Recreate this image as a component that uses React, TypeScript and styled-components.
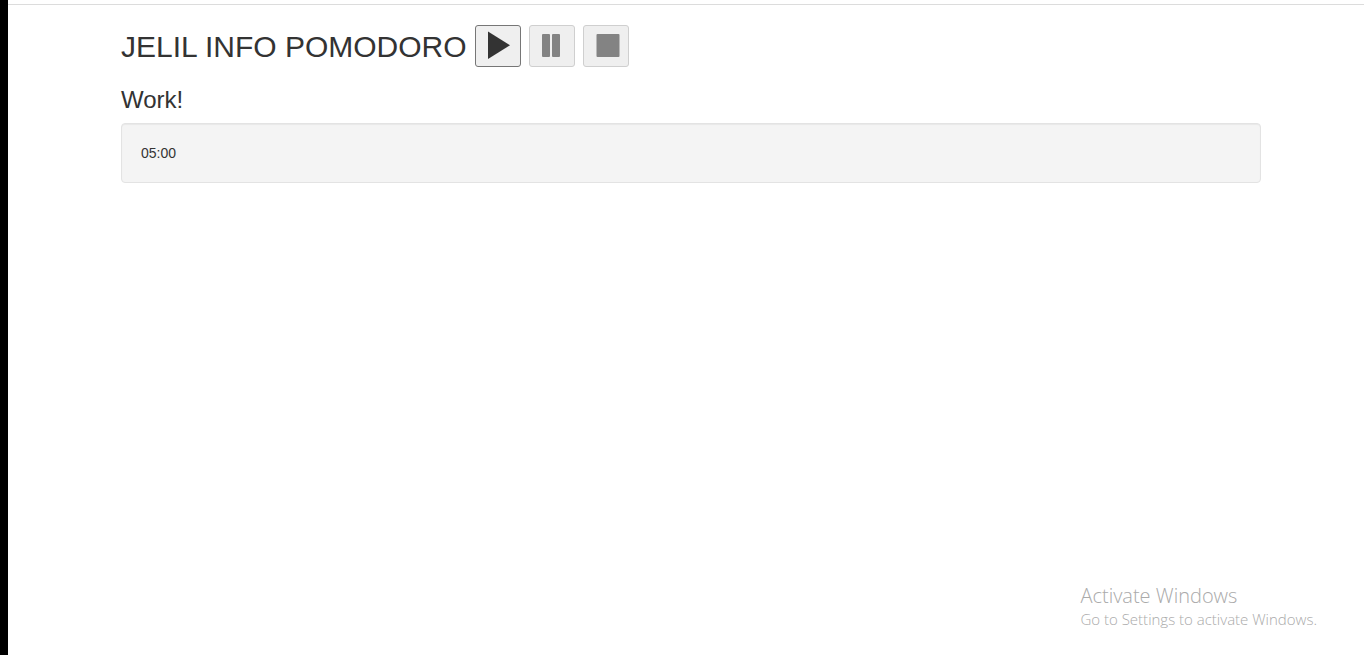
import React from 'react';
import styled, { createGlobalStyle } from 'styled-components';

const GlobalStyle = createGlobalStyle`
  *, *::before, *::after { box-sizing: border-box; }
  body {
    margin: 0;
    background: #fff;
    color: #333;
    font: 14px/20px "Liberation Sans", Arial, sans-serif;
  }
`;

const Page = styled.div`
  position: relative;
  min-height: 100vh;
  border-left: 8px solid #000;
`;

const TopRule = styled.div`
  height: 5px;
  border-bottom: 1px solid #dcdcdc;
`;

const Main = styled.main`
  max-width: 1150px;
  margin: 0 auto;
  padding: 20px 0 0 10px;
`;

const TitleRow = styled.header`
  display: flex;
  align-items: flex-start;
  flex-wrap: wrap;
  gap: 8px;
`;

const Title = styled.h1`
  margin: 0;
  font-size: 30px;
  font-weight: 400;
  line-height: 44px;
`;

const ControlButton = styled.button`
  display: block;
  width: 46px;
  height: 42px;
  padding: 0;
  border: 1px solid #767676;
  border-radius: 3px;
  background: #efefef;
  color: #333;

  &:disabled {
    border-color: #cfcfcf;
    color: #838383;
  }
`;

const Icon = styled.svg`
  display: block;
  width: 44px;
  height: 40px;
  fill: currentColor;
`;

const Phase = styled.h2`
  margin: 18px 0 10px;
  font-size: 24px;
  font-weight: 400;
  line-height: 26px;
`;

const Well = styled.div`
  min-height: 60px;
  padding: 19px;
  border: 1px solid #e3e3e3;
  border-radius: 4px;
  background: #f4f4f4;
  box-shadow: inset 0 1px 1px rgba(0, 0, 0, 0.05);
`;

const Watermark = styled.aside`
  position: absolute;
  right: 47px;
  bottom: 25px;
  color: #aaa;
  font-family: "Open Sans", sans-serif;
  font-size: 15px;
  font-weight: 300;
  line-height: 22px;
`;

const WatermarkTitle = styled.div`
  font-size: 20px;
  line-height: 24px;
`;

export default function App() {
  return (
    <Page>
      <GlobalStyle />
      <TopRule />
      <Main>
        <TitleRow>
          <Title>JELIL INFO POMODORO</Title>
          <ControlButton type="button" aria-label="Start">
            <Icon viewBox="0 0 44 40" aria-hidden="true">
              <path d="M12 5.5 34 19.2 12 33Z" />
            </Icon>
          </ControlButton>
          <ControlButton type="button" aria-label="Pause" disabled>
            <Icon viewBox="0 0 44 40" aria-hidden="true">
              <rect x="12" y="8" width="8" height="23" rx="1" />
              <rect x="22" y="8" width="8" height="23" rx="1" />
            </Icon>
          </ControlButton>
          <ControlButton type="button" aria-label="Stop" disabled>
            <Icon viewBox="0 0 44 40" aria-hidden="true">
              <rect x="12.5" y="8" width="23" height="23" rx="1" />
            </Icon>
          </ControlButton>
        </TitleRow>
        <Phase>Work!</Phase>
        <Well role="timer">05:00</Well>
      </Main>
      <Watermark>
        <WatermarkTitle>Activate Windows</WatermarkTitle>
        Go to Settings to activate Windows.
      </Watermark>
    </Page>
  );
}
